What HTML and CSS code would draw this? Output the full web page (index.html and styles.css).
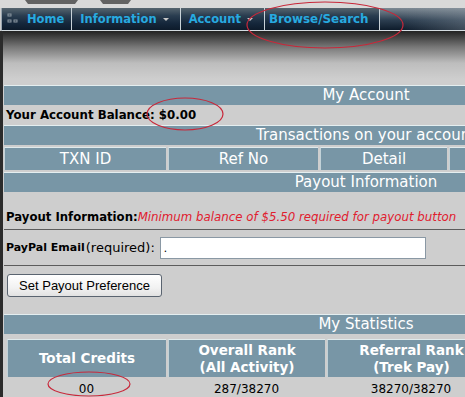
FILE: index.html
```html
<!DOCTYPE html>
<html lang="en">
<head>
  <meta charset="UTF-8" />
  <meta name="viewport" content="width=device-width, initial-scale=1.0"/>
  <title>My Account</title>
  <link rel="stylesheet" href="styles.css">
</head>
<body>
  <div class="topstrip">
    <svg width="140" height="8" viewBox="0 0 140 8">
      <polygon points="25,0 78,0 75,4 28,4" fill="#626262"/>
      <polygon points="100,0 131,0 128,4 103,4" fill="#626262"/>
    </svg>
  </div>

  <div class="nav">
    <span class="nav-icon">
      <svg width="12" height="12" viewBox="0 0 12 12">
        <rect x="1" y="1" width="3" height="2" fill="none" stroke="#8a96a0" stroke-width="1"/>
        <rect x="1" y="7" width="3" height="2" fill="none" stroke="#8a96a0" stroke-width="1"/>
        <rect x="7" y="7" width="3" height="2" fill="none" stroke="#8a96a0" stroke-width="1"/>
      </svg>
    </span>
    <a class="nav-item" href="#">Home</a>
    <a class="nav-item has-menu" href="#">Information<span class="caret"></span></a>
    <a class="nav-item has-menu" href="#">Account<span class="caret"></span></a>
    <a class="nav-item last" href="#">Browse/Search</a>
    <span class="nav-fill"></span>
  </div>

  <div class="page">
    <div class="content">
      <div class="section-head">My Account</div>
      <div class="balance">Your Account Balance: $0.00</div>

      <div class="section-head">Transactions on your account</div>
      <table class="grid txn">
        <tr>
          <th class="c1">TXN ID</th>
          <th class="c2">Ref No</th>
          <th class="c3">Detail</th>
          <th>Amount</th>
        </tr>
      </table>

      <div class="section-head">Payout Information</div>
      <div class="form-row info">
        <b>Payout Information:</b><span class="warn">Minimum balance of $5.50 required for payout button</span>
      </div>
      <div class="form-row email">
        <b>PayPal Email</b><span class="req">(required):</span>
        <input class="field" type="text" value="." />
      </div>
      <div class="btn-row">
        <button class="btn">Set Payout Preference</button>
      </div>

      <div class="section-head">My Statistics</div>
      <table class="grid stats">
        <tr>
          <th class="s1">Total Credits</th>
          <th class="s2">Overall Rank<br>(All Activity)</th>
          <th class="s3">Referral Rank<br>(Trek Pay)</th>
          <th>Credits Earned</th>
        </tr>
        <tr>
          <td>00</td>
          <td>287/38270</td>
          <td>38270/38270</td>
          <td>0</td>
        </tr>
      </table>
    </div>
  </div>

  <!-- red marker circles drawn over the capture -->
  <svg class="marks" width="465" height="397" viewBox="0 0 465 397">
    <ellipse cx="325" cy="25" rx="78" ry="23"/>
    <ellipse cx="185" cy="114" rx="38" ry="16"/>
    <ellipse cx="89" cy="384" rx="41" ry="12"/>
  </svg>
</body>
</html>
```

FILE: styles.css
```css
html, body {
  overflow: hidden;
}
body {
  margin: 0;
  padding: 0;
  background-color: #cecece;
  font-family: "DejaVu Sans", Verdana, sans-serif;
  font-size: 12px;
  color: #000;
  position: relative;
  height: 397px;
}
.topstrip {
  height: 8px;
  background-color: #d9d9d9;
  line-height: 0;
}
.nav {
  display: flex;
  align-items: center;
  height: 22px;
  background: linear-gradient(#56656f 0%, #2a3d50 35%, #15273b 70%, #0d1b2b 100%);
  border-bottom: 1px solid #d4dbe0;
  border-left: 1px solid #9aa6b0;
  margin-left: 1px;
}
.nav-icon {
  display: flex;
  width: 12px;
  padding-left: 5px;
}
.nav-item {
  display: flex;
  align-items: center;
  height: 22px;
  padding: 0 7px 0 8px;
  color: #27aae0;
  font-weight: bold;
  font-size: 11.5px;
  text-decoration: none;
  border-right: 1px solid #c9d2d8;
}
.nav-item.last {
  padding: 0 10px 0 4px;
  font-size: 11.9px;
}
.nav-fill {
  flex: 1;
  align-self: stretch;
  background: linear-gradient(to right, rgba(150, 160, 170, 0) 20px, rgba(150, 160, 170, 0.35)),
              linear-gradient(#7e8a94, #2c3e50 55%, #0d1b2b);
}
.has-menu {
  padding-right: 11px;
}
.caret {
  display: inline-block;
  margin-left: 6px;
  border-left: 3px solid transparent;
  border-right: 3px solid transparent;
  border-top: 3px solid #c8c8c8;
}
.page {
  border-left: 3px solid #2b2b2b;
  padding-left: 1px;
  padding-top: 54px;
  background: linear-gradient(#222 0px, #777 16px, #bdbdbd 32px, #cecece 48px);
}
.content {
  width: 724px;
}
.section-head {
  height: 19px;
  line-height: 19px;
  border-top: 1px solid #e4eef0;
  background-color: #7896a6;
  color: #fff;
  font-size: 15px;
  text-align: center;
}
.balance {
  height: 20px;
  line-height: 20px;
  padding-left: 2px;
  font-weight: bold;
  font-size: 11.8px;
}
.grid {
  table-layout: fixed;
  border-collapse: separate;
  width: 728px;
  margin: 0 -2px;
}
.grid th {
  box-sizing: border-box;
  padding: 0;
  background-color: #7896a6;
  border-top: 1px solid #dfeaec;
  border-left: 1px solid #c2d2d8;
  color: #fff;
  font-size: 15px;
  font-weight: normal;
  text-align: center;
  white-space: nowrap;
  overflow: hidden;
}
.txn {
  border-spacing: 2px;
}
.txn th {
  height: 23px;
}
.txn .c1 { width: 162px; }
.txn .c2 { width: 150px; }
.txn .c3 { width: 127px; }
.form-row {
  padding-left: 2px;
}
.info {
  padding-top: 13px;
  height: 24px;
  line-height: 24px;
  border-bottom: 1px solid #5c5c5c;
}
.info b {
  font-size: 11.7px;
}
.warn {
  color: #e0202e;
  font-style: italic;
  font-size: 11.8px;
}
.email {
  display: flex;
  align-items: center;
  height: 35px;
  border-bottom: 1px solid #5c5c5c;
}
.email b {
  font-size: 11px;
}
.req {
  font-size: 13px;
  margin-left: 1px;
}
.field {
  margin-left: 5px;
  width: 266px;
  height: 22px;
  padding: 0 3px;
  box-sizing: border-box;
  border: 1px solid #8a98a4;
  background: #fff;
  font-size: 12px;
}
.btn-row {
  padding: 8px 0 17px 3px;
}
.btn {
  width: 155px;
  height: 23px;
  padding: 0;
  border: 1px solid #5a6470;
  border-radius: 3px;
  background: linear-gradient(#ffffff, #f2f2f2 60%, #e2e2e2);
  font-family: "Liberation Sans", Arial, sans-serif;
  font-size: 13px;
  color: #000;
}
.stats {
  border-spacing: 2px;
  margin-top: 3px;
  margin-left: 1px;
}
.stats th {
  height: 38px;
  line-height: 17px;
  font-size: 13.5px;
  font-weight: bold;
}
.stats .s1 { width: 159px; }
.stats .s2 { width: 157px; }
.stats .s3 { width: 168px; }
.stats td {
  height: 19px;
  padding: 0;
  text-align: center;
}
.marks {
  position: absolute;
  top: 0;
  left: 0;
  pointer-events: none;
}
.marks ellipse {
  fill: none;
  stroke: #c8283a;
  stroke-width: 1.2;
}
```
